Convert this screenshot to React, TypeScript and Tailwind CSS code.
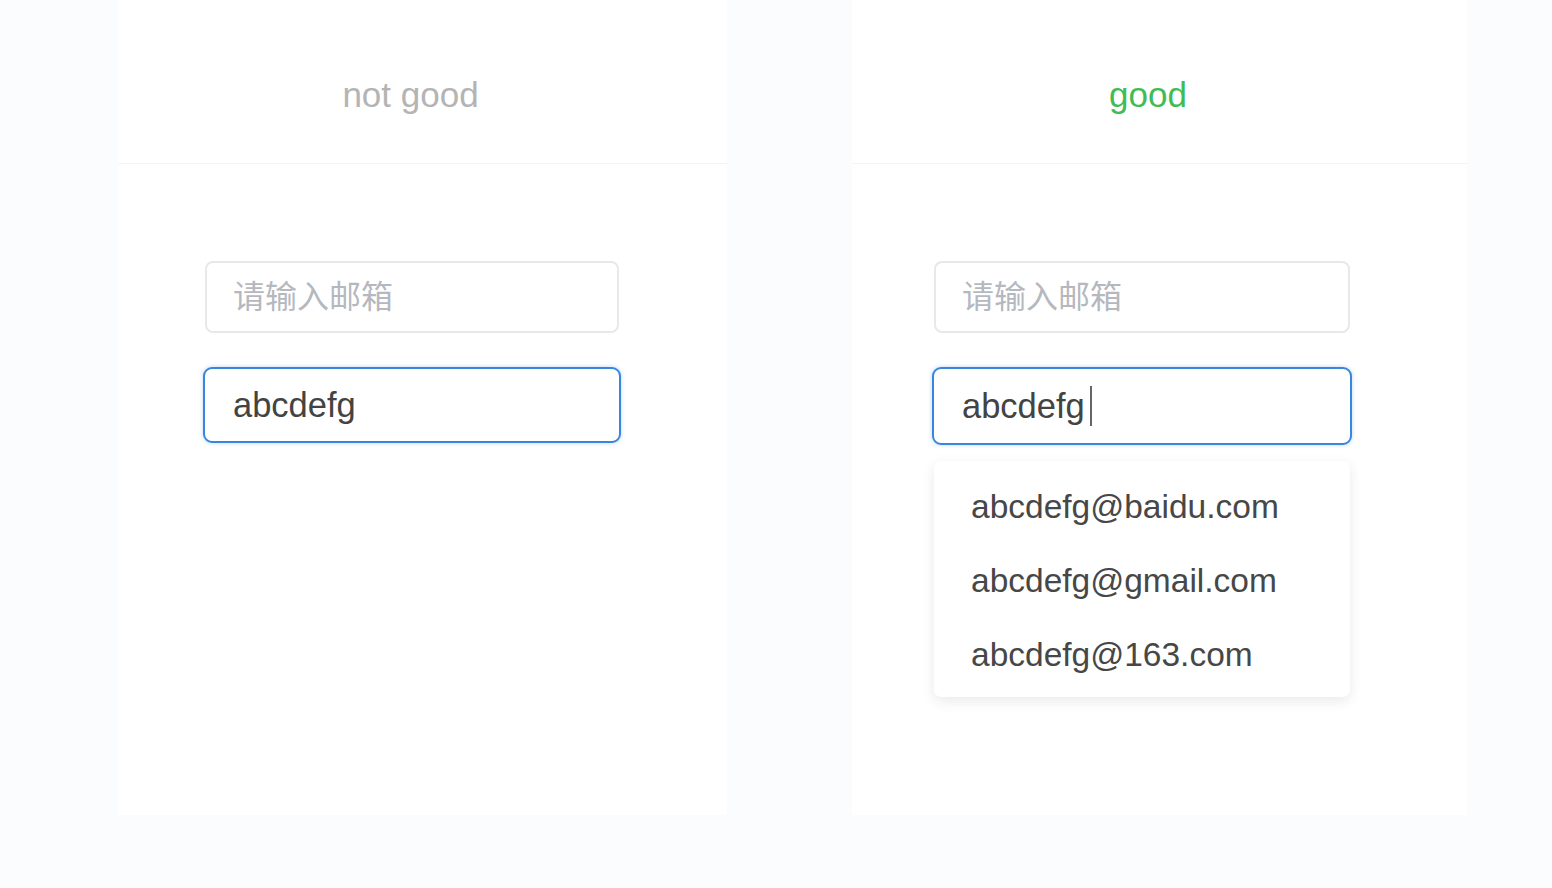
const font = { fontFamily: '"Liberation Sans", "Noto Sans CJK SC", Arial, sans-serif' };

function Header({ label, tone, pad }: { label: string; tone: string; pad: string }) {
  return (
    <div className={`h-[164px] flex items-center justify-center border-b border-[#f2f4f7] ${pad}`}>
      <span className={`text-[35px] leading-none mt-[26px] ${tone}`}>{label}</span>
    </div>
  );
}

function PlainInput({ className }: { className: string }) {
  return (
    <div className={`h-[72px] rounded-[8px] border-2 border-[#e6e8ec] bg-white flex items-center pl-[26px] ${className}`}>
      <span className="text-[32px] text-[#b5b8be] leading-none">请输入邮箱</span>
    </div>
  );
}

function FocusedInput({ className, caret }: { className: string; caret?: boolean }) {
  return (
    <div
      className={`rounded-[9px] border-2 border-[#3a86dd] bg-white flex items-center pl-[28px] shadow-[0_0_4px_rgba(58,134,221,0.35)] ${className}`}
    >
      <span className="text-[34.5px] text-[#434343] leading-none">abcdefg</span>
      {caret && <span className="ml-[5px] w-[2px] h-[40px] bg-[#666]" />}
    </div>
  );
}

const suggestions = ["abcdefg@baidu.com", "abcdefg@gmail.com", "abcdefg@163.com"];

export default function App() {
  return (
    <div className="w-[1552px] h-[888px] bg-[#fbfcfe] flex overflow-hidden" style={font}>
      <div className="ml-[118px] w-[609px] h-[815px] bg-white flex flex-col">
        <Header label="not good" tone="text-[#b4b4b4]" pad="pr-[24px]" />
        <div className="pt-[97px] flex flex-col">
          <PlainInput className="ml-[87px] w-[414px]" />
          <FocusedInput className="mt-[34px] ml-[85px] w-[418px] h-[76px]" />
        </div>
      </div>

      <div className="ml-[125px] w-[615px] h-[815px] bg-white flex flex-col">
        <Header label="good" tone="text-[#3fbd54]" pad="pr-[23px]" />
        <div className="pt-[97px] flex flex-col">
          <PlainInput className="ml-[82px] w-[416px]" />
          <FocusedInput className="mt-[34px] ml-[80px] w-[420px] h-[78px]" caret />
          <div className="mt-[16px] ml-[82px] w-[416px] rounded-[7px] bg-white pt-[9px] pb-[5px] shadow-[0_4px_14px_rgba(0,0,0,0.09)]">
            {suggestions.map((s) => (
              <div key={s} className="h-[74px] flex items-center pl-[37px]">
                <span className="text-[33.5px] text-[#474747] leading-none">{s}</span>
              </div>
            ))}
          </div>
        </div>
      </div>
    </div>
  );
}
